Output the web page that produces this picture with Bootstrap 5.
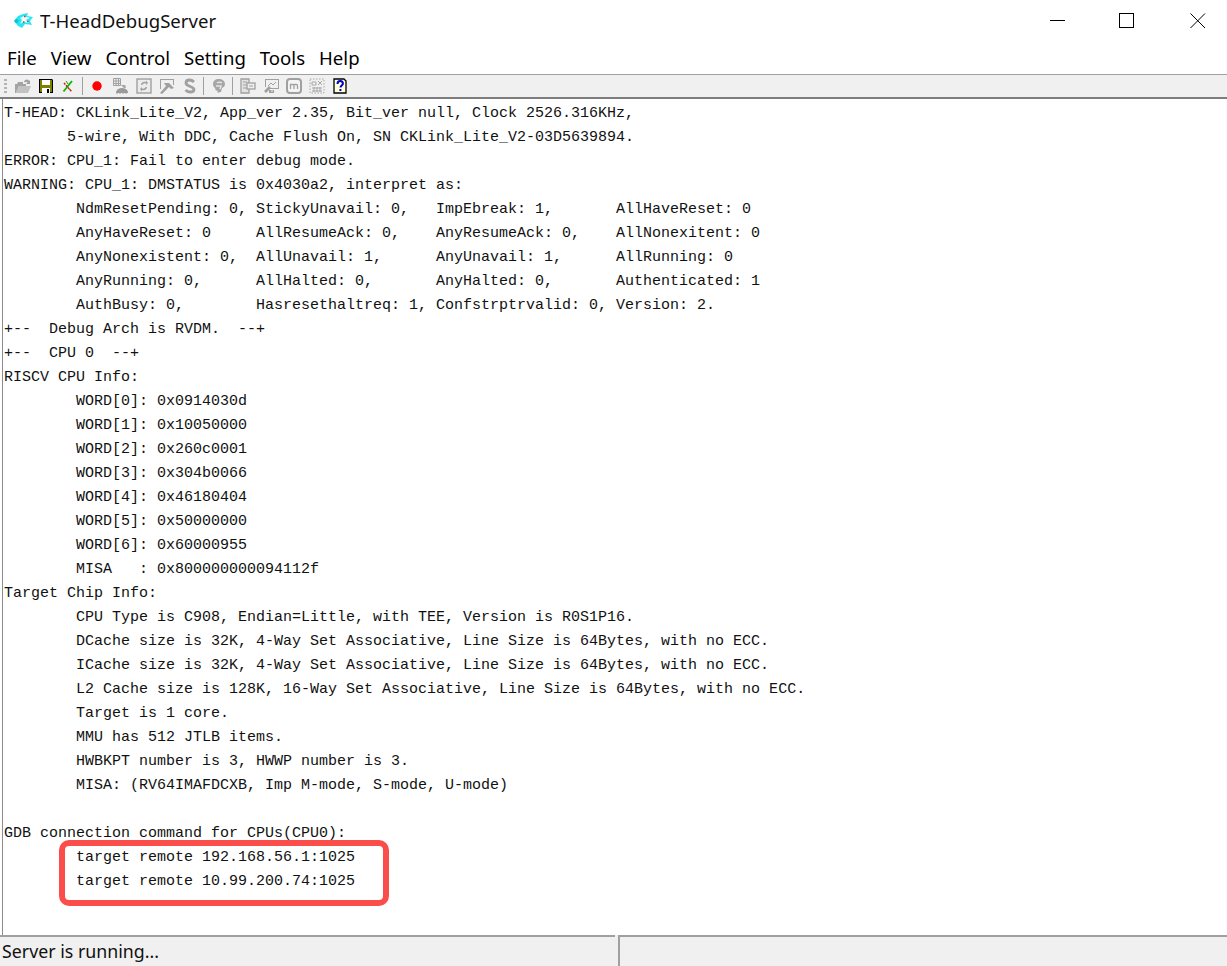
<!DOCTYPE html>
<html lang="en">
<head>
<meta charset="utf-8">
<title>T-HeadDebugServer</title>
<link href="https://cdn.jsdelivr.net/npm/bootstrap@5.3.0/dist/css/bootstrap.min.css" rel="stylesheet">
<style>
html,body{height:100%;}
body{width:1227px;height:966px;overflow:hidden;background:#fff;color:#000;font-family:"Noto Sans","Open Sans",sans-serif;}
.app-shell{height:966px;}
.title-strip{height:42px;padding-left:14px;font-size:18.6px;}
.title-strip .app-name{margin-left:6px;color:#111;}
.win-btn{width:16px;height:16px;display:block;}
.win-max{margin-left:-1px;margin-right:1px;}
.win-ctrls{gap:54px;padding-right:21px;}
.menu-strip{height:32px;padding:1px 0 0 7px;gap:14px;font-size:18.6px;line-height:30px;}
.menu-strip a{color:#000;text-decoration:none;}
.tool-strip{height:25px;background:#f0f0f0;border-top:1px solid #a0a0a0;border-bottom:2px solid #7d7d7d;padding-left:4px;}
.grip{width:3px;height:16px;margin-right:8px;background-image:radial-gradient(circle,#b4b4b4 1.3px,transparent 1.4px);background-size:3px 4px;}
.tb-icon{width:16px;height:16px;margin-right:7px;display:block;flex:none;}
.tb-sep{width:1px;height:18px;background:#a0a0a0;margin-left:-2px;margin-right:7px;flex:none;}
.log-pane{position:relative;min-height:0;border-left:1px solid #8c8c8c;margin-left:2px;padding-top:3px;}
.log-text{margin:0;padding:0 0 0 1px;font-family:"Liberation Mono","Courier New",monospace;font-size:15px;line-height:24px;color:#111;white-space:pre;overflow:hidden;}
.note-box{position:absolute;left:56px;top:741px;width:330px;height:66px;border:6px solid #fb4e4b;border-radius:10px;pointer-events:none;}
.status-strip{height:31px;background:#f0f0f0;font-size:17.8px;position:relative;}
.status-a{width:615px;border-top:2px solid #a0a0a0;padding-left:2px;line-height:29px;color:#111;}
.status-b{border-top:2px solid #a0a0a0;border-left:2px solid #a0a0a0;margin-left:3px;}
</style>
</head>
<body>
<div class="app-shell d-flex flex-column">
  <div class="title-strip d-flex align-items-center">
    <svg width="20" height="16" viewBox="0 0 20 16" aria-hidden="true">
      <path d="M0 8 4 3 9 1 14 0 13 3 19 4 16 8 18 12 11 11 8 15 4 13Z" fill="#27e6ef"/>
      <path d="M6 5 10 3 16 5 12 7 15 10 9 9 6 11 8 7Z" fill="#e4feff"/>
      <circle cx="2.500" cy="8" r="2" fill="#09c4d8"/>
      <path d="M9 9h1.500M13 8.500h1.500M10 3.500h1.500" stroke="#e0304a" stroke-width="1.300"/>
    </svg>
    <span class="app-name">T-HeadDebugServer</span>
    <div class="ms-auto d-flex align-items-center win-ctrls">
      <svg class="win-btn" viewBox="0 0 16 16" aria-hidden="true"><path d="M0 7.500H15" stroke="#000" fill="none"/></svg>
      <svg class="win-btn win-max" viewBox="0 0 16 16" aria-hidden="true"><rect x=".5" y=".5" width="14" height="14" stroke="#000" fill="none"/></svg>
      <svg class="win-btn" viewBox="0 0 16 16" aria-hidden="true"><path d="M.5.500 15 15M15 .500.500 15" stroke="#000" fill="none"/></svg>
    </div>
  </div>
  <nav class="menu-strip d-flex">
    <a href="#">File</a><a href="#">View</a><a href="#">Control</a><a href="#">Setting</a><a href="#">Tools</a><a href="#">Help</a>
  </nav>
  <div class="tool-strip d-flex align-items-center">
    <div class="grip"></div>
    <svg class="tb-icon" viewBox="0 0 16 16" aria-hidden="true"><path d="M0 6h2l1-2h5v2h3v2H4L1 15H0Z" fill="#a4a4a4"/><path d="M4 8h12l-3 7H1Z" fill="#c2c2c2"/><path d="M9 3c2-2 4-2 5 0l1-1v4h-4l1.500-1.500c-1-1-2-1-3 0Z" fill="#a0a0a0"/></svg>
    <svg class="tb-icon" viewBox="0 0 16 16" aria-hidden="true"><path d="M1 1h13l1 1v13H1Z" fill="#000"/><path d="M2 2h2v5h8V2h2v12H2Z" fill="#808000"/><rect x="4" y="2" width="8" height="5" fill="#fff"/><rect x="4" y="10" width="8" height="5" fill="#fff"/><rect x="9" y="11" width="2" height="4" fill="#000"/></svg>
    <svg class="tb-icon" viewBox="0 0 16 16" aria-hidden="true"><path d="M2.500 13.500 11 3" stroke="#0b0" stroke-width="1.800"/><path d="M3 5 11 14" stroke="#e11" stroke-width="1.500" stroke-dasharray="2 1"/><path d="M5 3l2 3M8 11l2 1" stroke="#1a1" stroke-width="1"/></svg>
    <div class="tb-sep"></div>
    <svg class="tb-icon" viewBox="0 0 16 16" aria-hidden="true"><circle cx="7" cy="8" r="4.700" fill="#f00"/></svg>
    <svg class="tb-icon" viewBox="0 0 16 16" aria-hidden="true"><path d="M.5.500h7v7h-7ZM3 .500v7M5.500.500v7M.5 3h7M.5 5.500h7" stroke="#a0a0a0" fill="none"/><path d="M8 7h3l2 3h-2l-1-1Z" fill="#a0a0a0"/><path d="M3 14c1-3 3-4 6-4s5 1 6 4v1H3Z" fill="#9a9a9a"/><path d="M4 15v1M7 15v1M10 15v1M13 15v1M11 8h2" stroke="#a0a0a0"/></svg>
    <svg class="tb-icon" viewBox="0 0 16 16" aria-hidden="true"><rect x="1" y="1" width="14" height="14" fill="#ececec" stroke="#a0a0a0" stroke-width="1.400"/><path d="M5 7c0-2 2-4 5-3V2.500L12 5 10 7V5.500C8 5 6.500 6 6.500 7ZM11 9c0 2-2 4-5 3v1.500L4 11l2-2v1.500C8 11 9.500 10 9.500 9Z" fill="#a0a0a0"/></svg>
    <svg class="tb-icon" viewBox="0 0 16 16" aria-hidden="true"><path d="M1 1h14v6h-1V2H2v9H1Z" fill="#a0a0a0"/><path d="M1 15 7 8 5 5h5l5 5-3 1-2-2-7 7Z" fill="#a0a0a0"/></svg>
    <svg class="tb-icon" viewBox="0 0 16 16" aria-hidden="true"><path d="M12 4c-1-1-2.500-2-4.500-2C5 2 4 3.500 4 5c0 4 8 3 8 6.500C12 13 10.500 14 8 14c-2 0-3.500-1-4.500-2" stroke="#a0a0a0" stroke-width="2.800" fill="none"/></svg>
    <div class="tb-sep"></div>
    <svg class="tb-icon" viewBox="0 0 16 16" aria-hidden="true"><path d="M8 1C4 1 2 3 2 6c0 2 1 3 2 4l1 3 1-1 1 3 2-1 1 0 1-4c2-1 3-2 3-4 0-3-3-5-6-5Z" fill="#a6a6a6"/><path d="M6 5c1-1 4-1 5 0M5 8h5l-1 3" stroke="#e4e4e4" stroke-width="1.500" fill="none"/></svg>
    <div class="tb-sep"></div>
    <svg class="tb-icon" viewBox="0 0 16 16" aria-hidden="true"><path d="M1 1h8v14H1Z" fill="#e2e2e2" stroke="#a0a0a0" stroke-width="1.300"/><path d="M3 4h4M3 7h4M3 10h4" stroke="#a0a0a0"/><rect x="7" y="5" width="8" height="6" fill="#eee" stroke="#a0a0a0" stroke-width="1.300"/><path d="M9 8h4" stroke="#a0a0a0"/></svg>
    <svg class="tb-icon" viewBox="0 0 16 16" aria-hidden="true"><path d="M2 1h14v10H7v-1h8V2H3v7H2Z" fill="#a0a0a0"/><path d="M5 8l3-3 2 2 3-3" stroke="#a0a0a0" fill="none"/><path d="M1 13 6 8l2 2-5 5ZM6 12h5v3H6Z" fill="#a0a0a0"/><path d="M8 13h2" stroke="#eee"/></svg>
    <svg class="tb-icon" viewBox="0 0 16 16" aria-hidden="true"><rect x="1" y="1" width="14" height="14" rx="3" fill="#f4f4f4" stroke="#a0a0a0" stroke-width="2"/><path d="M4.500 11V6.500h2.500q1 0 1 1V11M8 7q0-.5 1-.5h1.500q1 0 1 1V11" stroke="#a0a0a0" stroke-width="1.300" fill="none"/></svg>
    <svg class="tb-icon" viewBox="0 0 16 16" aria-hidden="true"><path d="M1 1h14v14H1Z" fill="none" stroke="#a8a8a8" stroke-dasharray="1.500 1.500"/><path d="M3 4h4v3H3ZM9 3l4 4M13 3 9 7M3 10h10M3 13h10M5 9v5M8 9v5M11 9v5" stroke="#a8a8a8" fill="none"/></svg>
    <svg class="tb-icon" viewBox="0 0 16 16" aria-hidden="true"><path d="M2 1h10l2 2v12H2Z" fill="#ffffd8" stroke="#000" stroke-width="1.300"/><path d="M5.500 6c0-2 1.300-3 2.700-3s2.700 1 2.700 2.600c0 2-2.400 2-2.400 4" stroke="#00c" stroke-width="2" fill="none"/><rect x="7.400" y="11" width="2" height="2" fill="#00c"/></svg>
  </div>
  <main class="log-pane flex-grow-1">
<pre class="log-text">T-HEAD: CKLink_Lite_V2, App_ver 2.35, Bit_ver null, Clock 2526.316KHz,
       5-wire, With DDC, Cache Flush On, SN CKLink_Lite_V2-03D5639894.
ERROR: CPU_1: Fail to enter debug mode.
WARNING: CPU_1: DMSTATUS is 0x4030a2, interpret as:
        NdmResetPending: 0, StickyUnavail: 0,   ImpEbreak: 1,       AllHaveReset: 0
        AnyHaveReset: 0     AllResumeAck: 0,    AnyResumeAck: 0,    AllNonexitent: 0
        AnyNonexistent: 0,  AllUnavail: 1,      AnyUnavail: 1,      AllRunning: 0
        AnyRunning: 0,      AllHalted: 0,       AnyHalted: 0,       Authenticated: 1
        AuthBusy: 0,        Hasresethaltreq: 1, Confstrptrvalid: 0, Version: 2.
+--  Debug Arch is RVDM.  --+
+--  CPU 0  --+
RISCV CPU Info:
        WORD[0]: 0x0914030d
        WORD[1]: 0x10050000
        WORD[2]: 0x260c0001
        WORD[3]: 0x304b0066
        WORD[4]: 0x46180404
        WORD[5]: 0x50000000
        WORD[6]: 0x60000955
        MISA   : 0x800000000094112f
Target Chip Info:
        CPU Type is C908, Endian=Little, with TEE, Version is R0S1P16.
        DCache size is 32K, 4-Way Set Associative, Line Size is 64Bytes, with no ECC.
        ICache size is 32K, 4-Way Set Associative, Line Size is 64Bytes, with no ECC.
        L2 Cache size is 128K, 16-Way Set Associative, Line Size is 64Bytes, with no ECC.
        Target is 1 core.
        MMU has 512 JTLB items.
        HWBKPT number is 3, HWWP number is 3.
        MISA: (RV64IMAFDCXB, Imp M-mode, S-mode, U-mode)

GDB connection command for CPUs(CPU0):
        target remote 192.168.56.1:1025
        target remote 10.99.200.74:1025</pre>
    <div class="note-box"></div>
  </main>
  <footer class="status-strip d-flex">
    <div class="status-a">Server is running...</div>
    <div class="status-b flex-grow-1"></div>
  </footer>
</div>
</body>
</html>
